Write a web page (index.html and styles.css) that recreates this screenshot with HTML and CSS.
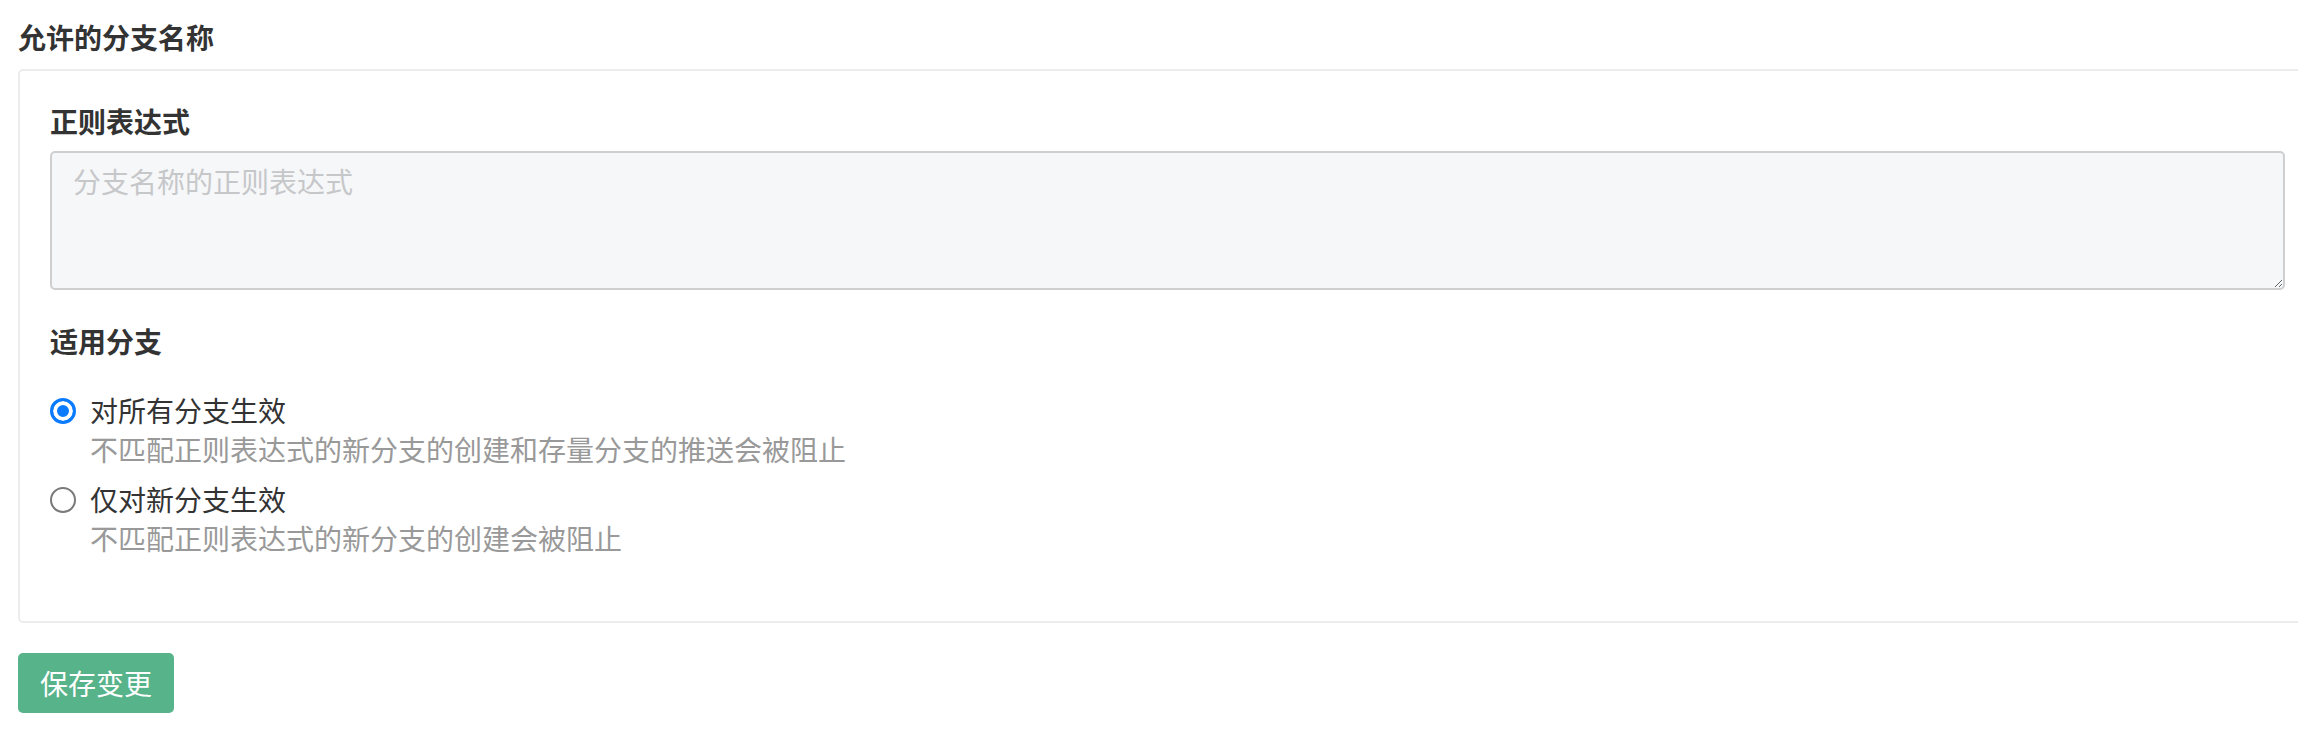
FILE: index.html
```html
<!DOCTYPE html>
<html lang="zh-CN">
<head>
<meta charset="utf-8">
<title>允许的分支名称</title>
<link rel="stylesheet" href="styles.css">
</head>
<body>
<main class="page">
  <h2 class="section-title">允许的分支名称</h2>
  <section class="card">
    <div class="field">
      <label class="field-label" for="regex">正则表达式</label>
      <textarea id="regex" class="textarea" placeholder="分支名称的正则表达式"></textarea>
    </div>
    <div class="field field-radios">
      <div class="field-label">适用分支</div>
      <div class="radio-list">
        <label class="radio-item">
          <input type="radio" name="scope" class="radio" checked>
          <span class="radio-text">
            <span class="radio-title">对所有分支生效</span>
            <span class="radio-desc">不匹配正则表达式的新分支的创建和存量分支的推送会被阻止</span>
          </span>
        </label>
        <label class="radio-item">
          <input type="radio" name="scope" class="radio">
          <span class="radio-text">
            <span class="radio-title">仅对新分支生效</span>
            <span class="radio-desc">不匹配正则表达式的新分支的创建会被阻止</span>
          </span>
        </label>
      </div>
    </div>
  </section>
  <button class="btn-save" type="button">保存变更</button>
</main>
</body>
</html>
```

FILE: styles.css
```css
* { box-sizing: border-box; }

html, body {
  margin: 0;
  padding: 0;
  background: #fff;
  overflow: hidden;
}

body {
  font-family: "Noto Sans CJK SC", "Noto Sans", "Liberation Sans", sans-serif;
  color: #333;
  font-size: 28px;
}

.page {
  padding: 17px 0 0 18px;
  width: 2317px;
}

.section-title {
  margin: 0 0 12px;
  font-size: 28px;
  line-height: 40px;
  font-weight: 600;
  color: #333;
}

.card {
  width: 2299px;
  border: 2px solid #ececec;
  border-radius: 5px;
  padding: 30px 30px 30px;
}

.field {
  display: flex;
  flex-direction: column;
}

.field + .field {
  margin-top: 31px;
}

.field-label {
  font-size: 28px;
  line-height: 40px;
  font-weight: 600;
  color: #333;
  margin-bottom: 10px;
}

.textarea {
  display: block;
  width: 100%;
  height: 139px;
  border: 2px solid #cfcfcf;
  border-radius: 5px;
  background: #f6f7f9;
  padding: 8px 21px;
  font-family: inherit;
  font-size: 28px;
  line-height: 40px;
  color: #333;
  outline: none;
  resize: both;
}

.textarea::placeholder {
  color: #c6c7c9;
}

.field-radios .field-label {
  margin-bottom: 30px;
}

.radio-list {
  display: flex;
  flex-direction: column;
  gap: 11px;
  padding-bottom: 33px;
}

.radio-item {
  display: flex;
  align-items: flex-start;
  gap: 14px;
  cursor: pointer;
}

.radio {
  appearance: none;
  -webkit-appearance: none;
  margin: 7px 0 0;
  width: 26px;
  height: 26px;
  flex: 0 0 26px;
  border-radius: 50%;
  border: 2px solid #7a7a7a;
  background: #fff;
}

.radio:checked {
  border: 3px solid #0a7bff;
  background: #0a7bff;
  box-shadow: inset 0 0 0 4px #fff;
}

.radio-text {
  display: flex;
  flex-direction: column;
}

.radio-title {
  font-size: 28px;
  line-height: 39px;
  color: #333;
}

.radio-desc {
  font-size: 28px;
  line-height: 39px;
  color: #999;
}

.btn-save {
  margin-top: 30px;
  width: 156px;
  height: 60px;
  border: none;
  border-radius: 5px;
  background: #57b38a;
  color: #fff;
  font-family: inherit;
  font-size: 28px;
  line-height: 40px;
  padding: 0;
  cursor: pointer;
}
```
